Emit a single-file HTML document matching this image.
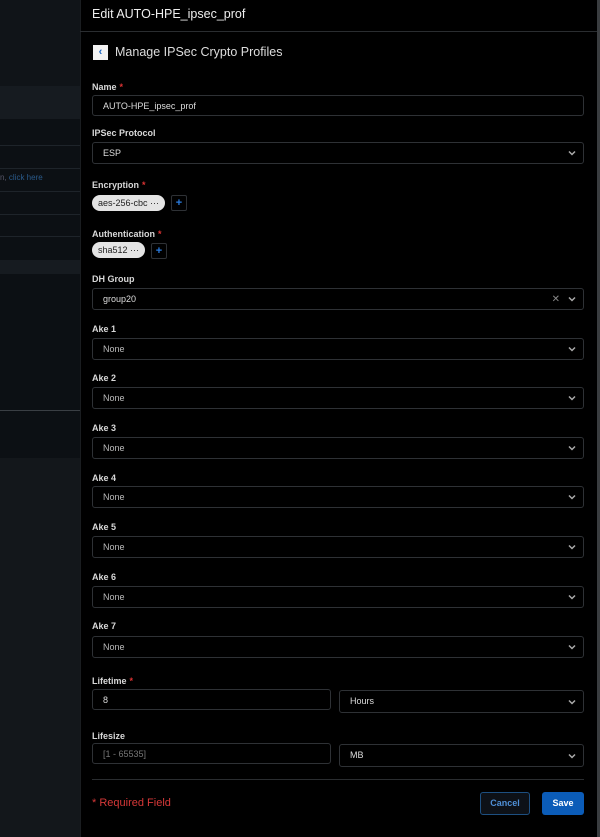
<!DOCTYPE html>
<html><head><style>
*{box-sizing:border-box;margin:0;padding:0}
body{width:600px;height:837px;background:#000;font-family:"Liberation Sans",sans-serif;position:relative;overflow:hidden;color:#e6e6e6}
.l{position:absolute;left:0;width:80px;background:#0c1014}
.b{position:absolute;left:0;width:80px;background:#161b20}
.ln{position:absolute;left:0;width:80px;height:1px;background:#1e242a}
.p{position:absolute;left:80px;top:0;width:517px;height:837px;background:#000;border-left:1px solid #1a1d20}
.rb{position:absolute;left:597px;top:0;width:3px;height:837px;background:#3a3d40}
.a{position:absolute}
.lab{position:absolute;left:92px;font-size:9px;font-weight:bold;color:#d8d8d8}
.lab i{color:#d33;font-style:normal;margin-left:3px}
.f{position:absolute;left:92px;width:492px;height:22px;border:1px solid #2e3135;border-radius:3px;font-size:9px;color:#ddd;padding-left:10px;line-height:20px}
.ch{position:absolute;right:7px;top:7px;width:8px;height:6px}
.x{position:absolute;right:23px;top:6px;font-size:10px;color:#888;line-height:10px}
.chip{position:absolute;left:92px;height:16px;border-radius:8px;background:#e4e4e4;color:#222;font-size:9px;line-height:16px;padding:0 6px}
.plus{position:absolute;width:16px;height:16px;border:1px solid #2e3135;border-radius:2px;color:#2a7de1;font-size:11px;text-align:center;line-height:14px;font-weight:bold}
</style></head><body>
<svg width="0" height="0" style="position:absolute"><defs><symbol id="c" viewBox="0 0 8 6"><path d="M1 1.5 L4 4.5 L7 1.5" stroke="#aaa" stroke-width="1.5" fill="none"/></symbol></defs></svg>
<div class="l" style="top:0;height:837px"></div>
<div class="b" style="top:0;height:86px;background:#101418"></div>
<div class="b" style="top:86px;height:33px"></div>
<div class="ln" style="top:145px"></div>
<div class="ln" style="top:168px"></div>
<div class="a" style="left:0;top:173px;font-size:8px;color:#556;white-space:nowrap">n, <span style="color:#2a5a8a">click here</span></div>
<div class="ln" style="top:191px"></div>
<div class="ln" style="top:214px"></div>
<div class="ln" style="top:236px"></div>
<div class="b" style="top:260px;height:14px"></div>
<div class="ln" style="top:410px;background:#3a3f44"></div>
<div class="b" style="top:458px;height:379px;background:#13171b"></div>
<div class="p"></div>
<div class="rb"></div>
<div class="a" style="left:80px;top:31px;width:517px;height:1px;background:#2a2d30"></div>
<div class="a" style="left:92px;top:7px;font-size:12.5px;color:#eee">Edit AUTO-HPE_ipsec_prof</div>
<div class="a" style="left:93px;top:45px;width:15px;height:15px;background:#f2f2f2;color:#1a66c2;font-size:11px;font-weight:bold;text-align:center;line-height:14px">&lsaquo;</div>
<div class="a" style="left:115px;top:45px;font-size:12.5px;color:#ddd">Manage IPSec Crypto Profiles</div>

<div class="lab" style="top:82px">Name<i>*</i></div>
<div class="f" style="top:95px;height:21px">AUTO-HPE_ipsec_prof</div>
<div class="lab" style="top:128px">IPSec Protocol</div>
<div class="f" style="top:142px">ESP<svg class="ch"><use href="#c"/></svg></div>
<div class="lab" style="top:180px">Encryption<i>*</i></div>
<div class="chip" style="top:195px">aes-256-cbc ···</div>
<div class="plus" style="left:171px;top:195px">+</div>
<div class="lab" style="top:229px">Authentication<i>*</i></div>
<div class="chip" style="top:242px">sha512 ···</div>
<div class="plus" style="left:151px;top:243px">+</div>
<div class="lab" style="top:274px">DH Group</div>
<div class="f" style="top:288px">group20<span class="x">✕</span><svg class="ch"><use href="#c"/></svg></div>

<div class="lab" style="top:324px">Ake 1</div><div class="f" style="top:338px;color:#bbb">None<svg class="ch"><use href="#c"/></svg></div>
<div class="lab" style="top:373px">Ake 2</div><div class="f" style="top:387px;color:#bbb">None<svg class="ch"><use href="#c"/></svg></div>
<div class="lab" style="top:423px">Ake 3</div><div class="f" style="top:437px;color:#bbb">None<svg class="ch"><use href="#c"/></svg></div>
<div class="lab" style="top:473px">Ake 4</div><div class="f" style="top:486px;color:#bbb">None<svg class="ch"><use href="#c"/></svg></div>
<div class="lab" style="top:522px">Ake 5</div><div class="f" style="top:536px;color:#bbb">None<svg class="ch"><use href="#c"/></svg></div>
<div class="lab" style="top:572px">Ake 6</div><div class="f" style="top:586px;color:#bbb">None<svg class="ch"><use href="#c"/></svg></div>
<div class="lab" style="top:621px">Ake 7</div><div class="f" style="top:636px;color:#bbb">None<svg class="ch"><use href="#c"/></svg></div>

<div class="lab" style="top:676px">Lifetime<i>*</i></div>
<div class="f" style="top:689px;width:239px;height:21px">8</div>
<div class="f" style="left:339px;top:690px;width:245px;height:23px;line-height:21px">Hours<svg class="ch" style="top:8px"><use href="#c"/></svg></div>
<div class="lab" style="top:731px">Lifesize</div>
<div class="f" style="top:743px;width:239px;height:21px;color:#777">[1 - 65535]</div>
<div class="f" style="left:339px;top:744px;width:245px;height:23px;line-height:21px">MB<svg class="ch" style="top:8px"><use href="#c"/></svg></div>
<div class="a" style="left:92px;top:779px;width:492px;height:1px;background:#2a2d30"></div>
<div class="a" style="left:92px;top:797px;font-size:11px;color:#d63838">* Required Field</div>
<div class="a" style="left:480px;top:792px;width:50px;height:23px;border:1px solid #1d4f80;border-radius:3px;background:#0d1117;color:#4f8fd6;font-size:9px;text-align:center;line-height:21px;font-weight:bold">Cancel</div>
<div class="a" style="left:542px;top:792px;width:42px;height:23px;border-radius:3px;background:#0b5cb8;color:#fff;font-size:9px;text-align:center;line-height:23px;font-weight:bold">Save</div>
</body></html>
